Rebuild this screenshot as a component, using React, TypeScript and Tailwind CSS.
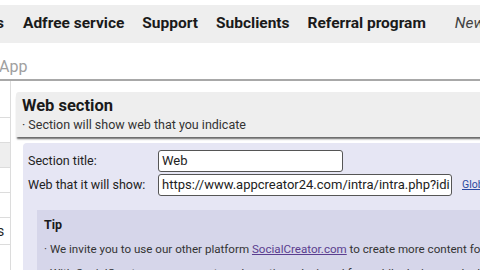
const navItems = ['Adfree service', 'Support', 'Subclients', 'Referral program'];

export default function App() {
  return (
    <div className="w-[480px] h-[270px] overflow-hidden bg-white font-['Roboto',sans-serif] text-[#222]">
      {/* top menu */}
      <div className="pt-[5px]">
        <div className="h-[38px] bg-[#eeeeee] flex items-center whitespace-nowrap text-[15.5px] font-bold text-[#1a1a1a]">
          <span className="ml-[-4px]">s</span>
          <div className="flex gap-[18px] ml-[19px]">
            {navItems.map((n) => (
              <span key={n}>{n}</span>
            ))}
          </div>
          <span className="ml-[29px] font-normal italic text-[#444]">New</span>
        </div>
      </div>

      {/* app title */}
      <div className="h-[38px] flex items-end pb-[2px] text-[16px] leading-[20px] text-[#a0a0a0] ml-[-1px] border-b-2 border-[#a8a8a8]">
        App
      </div>

      <div className="flex">
        {/* side menu */}
        <div className="w-[11px] shrink-0 border-r border-[#dcdcdc] h-[200px] pt-[36px] text-[14px]">
          <div className="h-[25px] border-t border-[#dcdcdc]" />
          <div className="h-[25px] bg-[#eeeeee] border-t border-[#dcdcdc]" />
          <div className="h-[25px] border-t border-[#dcdcdc]" />
          <div className="h-[25px] border-t border-[#dcdcdc]" />
          <div className="h-[28px] border-t border-b border-[#dcdcdc] flex items-center ml-[-3px]">s</div>
        </div>

        {/* main */}
        <div className="flex-1 pl-[5px] pt-[11px]">
          <div className="bg-[#eeeeee] rounded-tl-[3px] pl-[6px] pt-[4px] pb-[4px] shadow-[0_3px_2px_-1px_rgba(0,0,0,0.6)]">
            <div className="text-[16.5px] font-bold leading-[20px] text-[#1a1a1a]">Web section</div>
            <div className="text-[12.5px] leading-[17px] text-[#333]">· Section will show web that you indicate</div>
          </div>

          <div className="ml-[7px] mt-[6px] bg-[#e6e6f4] rounded-tl-[4px] h-[140px] text-[12.5px]">
            <div className="pt-[7px] pl-[5px] flex flex-col gap-[2px]">
              <div className="flex items-center h-[22px]">
                <span className="w-[130px]">Section title:</span>
                <div className="w-[185px] h-[22px] bg-white border border-[#555] rounded-[3px] px-[3px] flex items-center text-[13px]">Web</div>
              </div>
              <div className="flex items-center h-[22px]">
                <span className="w-[130px]">Web that it will show:</span>
                <div className="w-[294px] h-[22px] bg-white border border-[#555] rounded-[3px] px-[3px] flex items-center whitespace-nowrap overflow-hidden text-[13px]">
                  https://www.appcreator24.com/intra/intra.php?idi
                </div>
                <span className="ml-[10px] text-[10.5px] text-[#2b4aa0] underline">Global</span>
              </div>
            </div>

            <div className="mt-[14px] ml-[14px] bg-[#d6d6ea] h-[70px] pl-[7px] pt-[6px] whitespace-nowrap text-[11.6px]">
              <div className="font-bold text-[#1a1a1a] text-[12.5px]">Tip</div>
              <div className="mt-[6px] text-[#333]">
                · We invite you to use our other platform{' '}
                <span className="text-[#5a3d8f] underline">SocialCreator.com</span> to create more content for your app
              </div>
              <div className="mt-[7px] text-[#333]">· With SocialCreator you can create web sections designed for mobile devices and add them</div>
            </div>
          </div>
        </div>
      </div>
    </div>
  );
}
